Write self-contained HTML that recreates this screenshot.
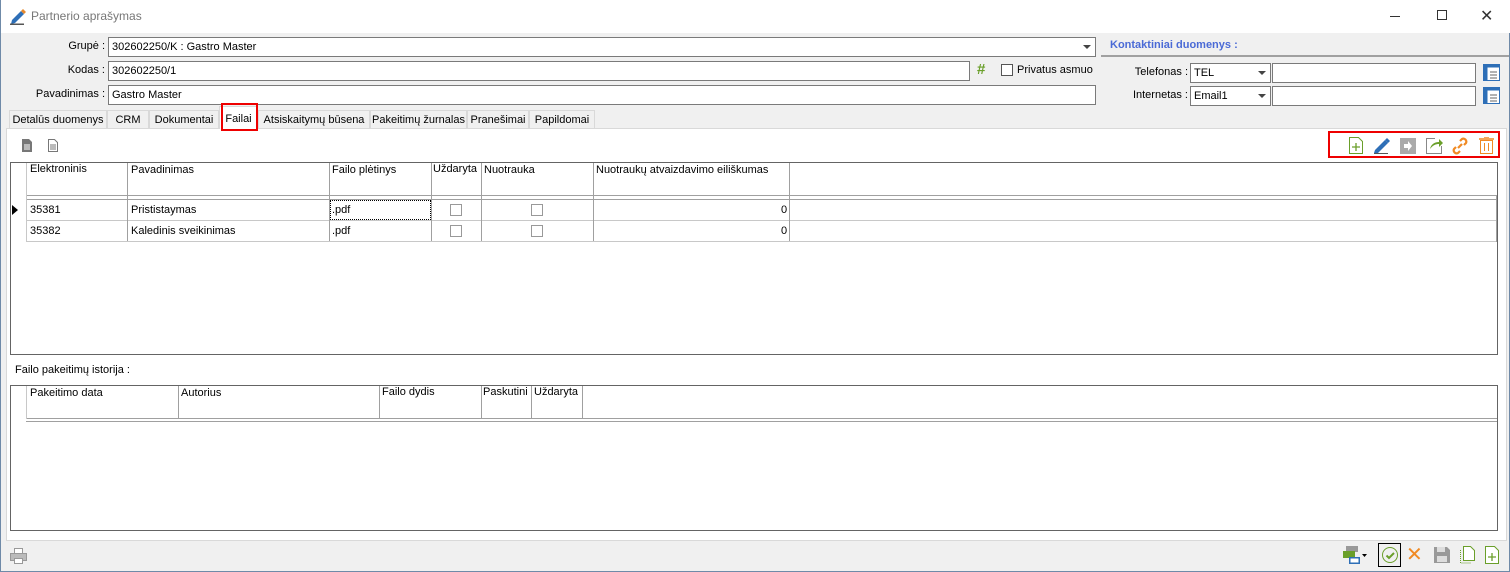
<!DOCTYPE html>
<html><head><meta charset="utf-8"><style>
*{box-sizing:border-box;margin:0;padding:0}
body{width:1510px;height:572px;background:#f0f0f0;font-family:"Liberation Sans",sans-serif;font-size:11px;color:#000;position:relative;overflow:hidden;border-left:1px solid #6f8aa8;border-right:1px solid #6f8aa8;border-bottom:1px solid #6f8aa8}
.a{position:absolute}
.inp{position:absolute;background:#fff;border:1px solid #7a7a7a;height:20px;padding:3px 3px;font-size:11px;line-height:13px}
.lbl{position:absolute;text-align:right;font-size:11px}
.tab{position:absolute;top:110px;height:18px;border:1px solid #d9d9d9;border-bottom:none;background:#f0f0f0;font-size:11px;padding-top:3px;text-align:center;white-space:nowrap}
.vl{position:absolute;width:1px;background:#a0a0a0}
.hl{position:absolute;height:1px;background:#a0a0a0}
.cb{position:absolute;width:12px;height:12px;border:1px solid #555;background:#fff}
.t{position:absolute;white-space:nowrap;font-size:11px}
</style></head><body>
<div class="a" style="left:0;top:0;width:1510px;height:33px;background:#fff"></div>
<svg class="a" style="left:8px;top:7px" width="18" height="18" viewBox="0 0 18 18"><path d="M3 13 L12 4 L15 7 L6 16 L2 17 Z" fill="#2e6fb7"/><path d="M12 4 L14 2 L17 5 L15 7Z" fill="#e8892c"/><rect x="1" y="16.5" width="14" height="1.5" fill="#555"/></svg>
<div class="t" style="left:30px;top:9px;color:#777;font-size:12px">Partnerio aprašymas</div>
<div class="a" style="left:1389px;top:16px;width:10px;height:1px;background:#333"></div>
<div class="a" style="left:1436px;top:10px;width:10px;height:10px;border:1px solid #333"></div>
<div class="t" style="left:1479px;top:6px;font-size:16px;color:#333">✕</div>

<div class="lbl" style="left:0;width:104px;top:40px">Grupė :</div>
<div class="inp" style="left:107px;top:37px;width:988px">302602250/K : Gastro Master</div>
<div class="a" style="left:1082px;top:45px;border-left:4px solid transparent;border-right:4px solid transparent;border-top:4px solid #444"></div>
<div class="lbl" style="left:0;width:104px;top:64px">Kodas :</div>
<div class="inp" style="left:107px;top:61px;width:862px">302602250/1</div>
<div class="t" style="left:976px;top:61px;color:#6a9f2a;font-weight:bold;font-size:15px">#</div>
<div class="cb" style="left:1000px;top:64px"></div>
<div class="t" style="left:1016px;top:64px">Privatus asmuo</div>
<div class="lbl" style="left:0;width:104px;top:88px">Pavadinimas :</div>
<div class="inp" style="left:107px;top:85px;width:988px">Gastro Master</div>

<div class="t" style="left:1109px;top:39px;color:#4a6ad6;font-weight:bold">Kontaktiniai duomenys :</div>
<div class="a" style="left:1100px;top:55px;width:408px;height:2px;background:#a0a0a0"></div>
<div class="lbl" style="left:1100px;width:87px;top:66px">Telefonas :</div>
<div class="inp" style="left:1189px;top:63px;width:81px">TEL</div>
<div class="a" style="left:1257px;top:71px;border-left:4px solid transparent;border-right:4px solid transparent;border-top:4px solid #444"></div>
<div class="inp" style="left:1271px;top:63px;width:204px"></div>
<div class="lbl" style="left:1100px;width:87px;top:89px">Internetas :</div>
<div class="inp" style="left:1189px;top:86px;width:81px">Email1</div>
<div class="a" style="left:1257px;top:94px;border-left:4px solid transparent;border-right:4px solid transparent;border-top:4px solid #444"></div>
<div class="inp" style="left:1271px;top:86px;width:204px"></div>
<svg class="a" style="left:1482px;top:64px" width="17" height="17"><rect x="0.5" y="0.5" width="16" height="16" fill="#fff" stroke="#2e6fb7"/><rect x="0.5" y="0.5" width="16" height="3" fill="#2e6fb7"/><rect x="0.5" y="0.5" width="4" height="16" fill="#2e6fb7"/><path d="M7 8h7M7 11h7M7 14h7" stroke="#666"/></svg>
<svg class="a" style="left:1482px;top:87px" width="17" height="17"><rect x="0.5" y="0.5" width="16" height="16" fill="#fff" stroke="#2e6fb7"/><rect x="0.5" y="0.5" width="16" height="3" fill="#2e6fb7"/><rect x="0.5" y="0.5" width="4" height="16" fill="#2e6fb7"/><path d="M7 8h7M7 11h7M7 14h7" stroke="#666"/></svg>

<div class="a" style="left:5px;top:128px;width:1501px;height:413px;background:#fff;border:1px solid #d9d9d9"></div>
<div class="tab" style="left:8px;width:98px">Detalūs duomenys</div>
<div class="tab" style="left:106px;width:42px">CRM</div>
<div class="tab" style="left:148px;width:70px">Dokumentai</div>
<div class="tab" style="left:218px;width:39px;top:106px;height:23px;background:#fff;padding-top:6px">Failai</div>
<div class="a" style="left:220px;top:103px;width:37px;height:28px;border:2px solid #e00"></div>
<div class="tab" style="left:257px;width:112px">Atsiskaitymų būsena</div>
<div class="tab" style="left:369px;width:97px">Pakeitimų žurnalas</div>
<div class="tab" style="left:466px;width:62px">Pranešimai</div>
<div class="tab" style="left:528px;width:66px">Papildomai</div>

<svg class="a" style="left:20px;top:139px" width="12" height="13"><path d="M1 0h7l3 3v10H1z" fill="#777"/><path d="M3 6h6M3 8h6M3 10h6" stroke="#fff"/></svg>
<svg class="a" style="left:46px;top:139px" width="12" height="13"><path d="M1.5 .5h6l3 3v9h-9z" fill="#fff" stroke="#777"/><path d="M3 6h6M3 8h6M3 10h6" stroke="#777"/></svg>

<div class="a" style="left:1327px;top:131px;width:172px;height:27px;border:2px solid #e00"></div>
<svg class="a" style="left:1347px;top:137px" width="16" height="17"><path d="M1.5 .5h9l4 4v12h-13z" fill="#fff" stroke="#6a9f2a"/><path d="M8 6v8M4 10h8" stroke="#6a9f2a" stroke-width="1.3"/></svg>
<svg class="a" style="left:1372px;top:137px" width="18" height="17"><path d="M2 13 L12 3 L15 6 L5 16 L1 16Z" fill="#2e6fb7"/><path d="M12 3l2-2 3 3-2 2z" fill="#2e6fb7"/><path d="M1 16.5h14" stroke="#555"/></svg>
<svg class="a" style="left:1399px;top:138px" width="16" height="16"><rect width="16" height="16" fill="#aaa"/><path d="M4 6h4V3l4 5-4 5v-3H4z" fill="#fff"/></svg>
<svg class="a" style="left:1424px;top:137px" width="18" height="17"><path d="M10 1.5H1.5v15h15V9" fill="none" stroke="#888"/><path d="M5 12c1-5 5-7 9-7V2l4 4-4 4V7c-3 0-6 1-9 5z" fill="#6a9f2a"/></svg>
<svg class="a" style="left:1450px;top:137px" width="18" height="18"><path d="M7 11l4-4M9 4l2-2a3 3 0 014 4l-2 2M9 14l-2 2a3 3 0 01-4-4l2-2" fill="none" stroke="#f08a24" stroke-width="2.2"/></svg>
<svg class="a" style="left:1478px;top:137px" width="15" height="17"><path d="M0 2h15M5 0h5" stroke="#f08a24" stroke-width="1.5"/><rect x="1.5" y="3.5" width="12" height="13" fill="#fff" stroke="#f08a24"/><path d="M5.5 6v8M9.5 6v8" stroke="#f08a24"/></svg>

<div class="a" style="left:9px;top:162px;width:1488px;height:193px;border:1px solid #646464"></div>
<div class="hl" style="left:25px;top:195px;width:1471px"></div>
<div class="hl" style="left:25px;top:199px;width:1471px"></div>
<div class="hl" style="left:25px;top:220px;width:1471px;background:#c8c8c8"></div>
<div class="hl" style="left:25px;top:241px;width:1471px;background:#c8c8c8"></div>
<div class="vl" style="left:25px;top:163px;height:78px;background:#c8c8c8"></div>
<div class="vl" style="left:126px;top:163px;height:78px"></div>
<div class="vl" style="left:328px;top:163px;height:78px"></div>
<div class="vl" style="left:430px;top:163px;height:78px"></div>
<div class="vl" style="left:480px;top:163px;height:78px"></div>
<div class="vl" style="left:592px;top:163px;height:78px"></div>
<div class="vl" style="left:788px;top:163px;height:78px"></div>
<div class="vl" style="left:1495px;top:195px;height:47px"></div>
<div class="t" style="left:29px;top:163px">Elektroninis</div>
<div class="t" style="left:130px;top:164px">Pavadinimas</div>
<div class="t" style="left:331px;top:164px">Failo plėtinys</div>
<div class="t" style="left:432px;top:163px">Uždaryta</div>
<div class="t" style="left:483px;top:164px">Nuotrauka</div>
<div class="t" style="left:595px;top:164px">Nuotraukų atvaizdavimo eiliškumas</div>
<div class="a" style="left:11px;top:205px;border-top:5px solid transparent;border-bottom:5px solid transparent;border-left:6px solid #000"></div>
<div class="t" style="left:29px;top:204px">35381</div>
<div class="t" style="left:130px;top:204px">Prististaymas</div>
<div class="a" style="left:329px;top:200px;width:101px;height:20px;border:1px dotted #000"></div>
<div class="t" style="left:331px;top:204px">.pdf</div>
<div class="cb" style="left:449px;top:204px;border-color:#999"></div>
<div class="cb" style="left:530px;top:204px;border-color:#999"></div>
<div class="t" style="left:780px;top:204px">0</div>
<div class="t" style="left:29px;top:225px">35382</div>
<div class="t" style="left:130px;top:225px">Kaledinis sveikinimas</div>
<div class="t" style="left:331px;top:225px">.pdf</div>
<div class="cb" style="left:449px;top:225px;border-color:#999"></div>
<div class="cb" style="left:530px;top:225px;border-color:#999"></div>
<div class="t" style="left:780px;top:225px">0</div>

<div class="t" style="left:14px;top:364px">Failo pakeitimų istorija :</div>
<div class="a" style="left:9px;top:385px;width:1488px;height:146px;border:1px solid #646464"></div>
<div class="hl" style="left:25px;top:418px;width:1471px"></div>
<div class="hl" style="left:25px;top:421px;width:1471px"></div>
<div class="vl" style="left:25px;top:386px;height:33px;background:#c8c8c8"></div>
<div class="vl" style="left:177px;top:386px;height:33px"></div>
<div class="vl" style="left:378px;top:386px;height:33px"></div>
<div class="vl" style="left:480px;top:386px;height:33px"></div>
<div class="vl" style="left:530px;top:386px;height:33px"></div>
<div class="vl" style="left:581px;top:386px;height:33px"></div>
<div class="t" style="left:29px;top:387px">Pakeitimo data</div>
<div class="t" style="left:180px;top:387px">Autorius</div>
<div class="t" style="left:381px;top:386px">Failo dydis</div>
<div class="t" style="left:482px;top:386px">Paskutini</div>
<div class="t" style="left:533px;top:386px">Uždaryta</div>

<svg class="a" style="left:9px;top:548px" width="17" height="16"><rect x="4.5" y=".5" width="8" height="5" fill="#fff" stroke="#999"/><rect x=".5" y="5.5" width="16" height="7" fill="#bbb" stroke="#999"/><rect x="4.5" y="10.5" width="8" height="5" fill="#fff" stroke="#999"/></svg>
<svg class="a" style="left:1341px;top:545px" width="26" height="20"><rect x="4" y="1" width="12" height="6" fill="#999"/><rect x="1" y="6" width="12" height="7" fill="#6a9f2a"/><rect x="7" y="12" width="11" height="7" fill="#2e6fb7"/><rect x="8.5" y="13.5" width="8" height="4" fill="#fff"/><path d="M20 9h5l-2.5 3z" fill="#000"/></svg>
<div class="a" style="left:1377px;top:543px;width:23px;height:24px;border:1px solid #000"></div>
<svg class="a" style="left:1380px;top:546px" width="18" height="18"><circle cx="9" cy="9" r="7.5" fill="none" stroke="#6a9f2a"/><path d="M5.5 9.5l2.5 2.5 5-5" fill="none" stroke="#6a9f2a" stroke-width="2"/></svg>
<div class="t" style="left:1405px;top:542px;color:#f08a24;font-size:20px">✕</div>
<svg class="a" style="left:1433px;top:547px" width="16" height="16"><path d="M0 0h13l3 3v13H0z" fill="#999"/><rect x="3" y="0" width="8" height="5" fill="#ddd"/><rect x="3" y="9" width="10" height="6" fill="#ddd"/></svg>
<svg class="a" style="left:1459px;top:546px" width="15" height="18"><path d="M3.5 .5h7l4 4v10h-11z" fill="#fff" stroke="#6a9f2a"/><path d="M.5 4v13h10" fill="none" stroke="#6a9f2a" stroke-dasharray="1 1"/></svg>
<svg class="a" style="left:1484px;top:546px" width="15" height="18"><path d="M.5 .5h9l4 4v13H.5z" fill="#fff" stroke="#6a9f2a"/><path d="M7 7v8M3 11h8" stroke="#6a9f2a" stroke-width="1.3"/></svg>
</body></html>
